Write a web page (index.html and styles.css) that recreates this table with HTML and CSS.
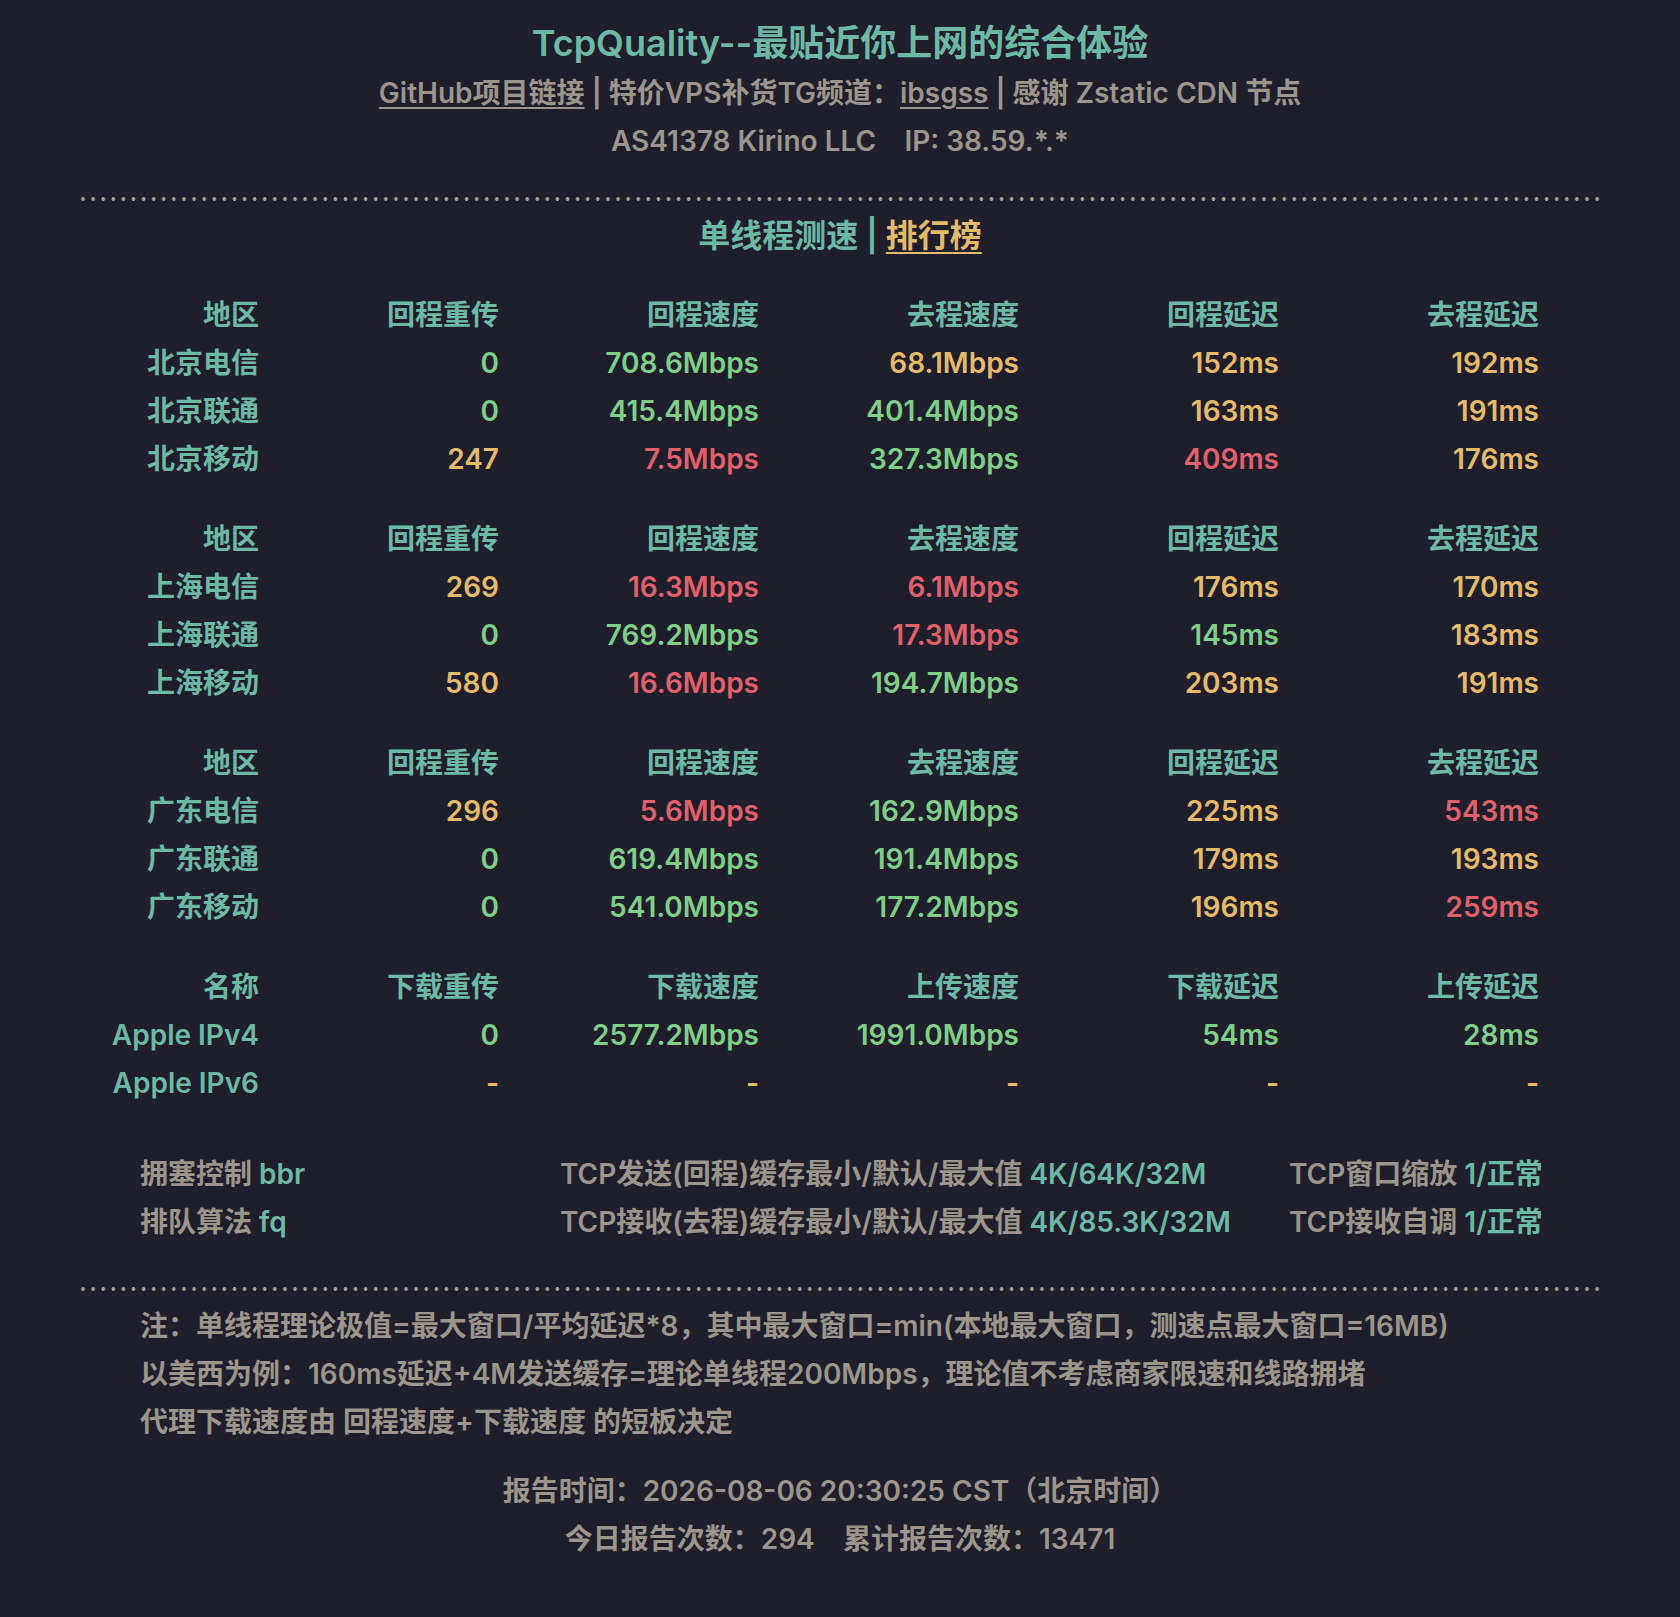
FILE: index.html
```html
<!DOCTYPE html>
<html lang="zh-CN">
<head>
<meta charset="utf-8">
<title>TcpQuality</title>
<link rel="stylesheet" href="styles.css">
</head>
<body>
<div class="page">
  <header class="head">
    <h1 class="title">TcpQuality--最贴近你上网的综合体验</h1>
    <p class="sub"><a class="link" href="#">GitHub项目链接</a> | 特价VPS补货TG频道：<a class="link" href="#">ibsgss</a> | 感谢 Zstatic CDN 节点</p>
    <p class="asn">AS41378 Kirino LLC&nbsp;&nbsp;&nbsp;&nbsp;IP: 38.59.*.*</p>
  </header>

  <div class="dots"></div>

  <h2 class="section">单线程测速 <span class="bar">|</span> <a class="rank" href="#">排行榜</a></h2>

  <div class="grid">
    <div class="h">地区</div><div class="h">回程重传</div><div class="h">回程速度</div><div class="h">去程速度</div><div class="h">回程延迟</div><div class="h">去程延迟</div>
    <div class="n">北京电信</div><div class="g">0</div><div class="g">708.6Mbps</div><div class="y">68.1Mbps</div><div class="y">152ms</div><div class="y">192ms</div>
    <div class="n">北京联通</div><div class="g">0</div><div class="g">415.4Mbps</div><div class="g">401.4Mbps</div><div class="y">163ms</div><div class="y">191ms</div>
    <div class="n">北京移动</div><div class="y">247</div><div class="r">7.5Mbps</div><div class="g">327.3Mbps</div><div class="r">409ms</div><div class="y">176ms</div>
  </div>

  <div class="grid gap">
    <div class="h">地区</div><div class="h">回程重传</div><div class="h">回程速度</div><div class="h">去程速度</div><div class="h">回程延迟</div><div class="h">去程延迟</div>
    <div class="n">上海电信</div><div class="y">269</div><div class="r">16.3Mbps</div><div class="r">6.1Mbps</div><div class="y">176ms</div><div class="y">170ms</div>
    <div class="n">上海联通</div><div class="g">0</div><div class="g">769.2Mbps</div><div class="r">17.3Mbps</div><div class="g">145ms</div><div class="y">183ms</div>
    <div class="n">上海移动</div><div class="y">580</div><div class="r">16.6Mbps</div><div class="g">194.7Mbps</div><div class="y">203ms</div><div class="y">191ms</div>
  </div>

  <div class="grid gap">
    <div class="h">地区</div><div class="h">回程重传</div><div class="h">回程速度</div><div class="h">去程速度</div><div class="h">回程延迟</div><div class="h">去程延迟</div>
    <div class="n">广东电信</div><div class="y">296</div><div class="r">5.6Mbps</div><div class="g">162.9Mbps</div><div class="y">225ms</div><div class="r">543ms</div>
    <div class="n">广东联通</div><div class="g">0</div><div class="g">619.4Mbps</div><div class="g">191.4Mbps</div><div class="y">179ms</div><div class="y">193ms</div>
    <div class="n">广东移动</div><div class="g">0</div><div class="g">541.0Mbps</div><div class="g">177.2Mbps</div><div class="y">196ms</div><div class="r">259ms</div>
  </div>

  <div class="grid gap">
    <div class="h">名称</div><div class="h">下载重传</div><div class="h">下载速度</div><div class="h">上传速度</div><div class="h">下载延迟</div><div class="h">上传延迟</div>
    <div class="n">Apple IPv4</div><div class="g">0</div><div class="g">2577.2Mbps</div><div class="g">1991.0Mbps</div><div class="g">54ms</div><div class="g">28ms</div>
    <div class="n">Apple IPv6</div><div class="y">-</div><div class="y">-</div><div class="y">-</div><div class="y">-</div><div class="y">-</div>
  </div>

  <div class="conf">
    <div>拥塞控制 <span class="v">bbr</span></div>
    <div>TCP发送(回程)缓存最小/默认/最大值 <span class="v">4K/64K/32M</span></div>
    <div>TCP窗口缩放 <span class="v">1/正常</span></div>
    <div>排队算法 <span class="v">fq</span></div>
    <div>TCP接收(去程)缓存最小/默认/最大值 <span class="v">4K/85.3K/32M</span></div>
    <div>TCP接收自调 <span class="v">1/正常</span></div>
  </div>

  <div class="dots dots2"></div>

  <div class="notes">
    <p>注：单线程理论极值=最大窗口/平均延迟*8，其中最大窗口=min(本地最大窗口，测速点最大窗口=16MB)</p>
    <p>以美西为例：160ms延迟+4M发送缓存=理论单线程200Mbps，理论值不考虑商家限速和线路拥堵</p>
    <p>代理下载速度由 回程速度+下载速度 的短板决定</p>
  </div>

  <footer class="foot">
    <p>报告时间：2026-08-06 20:30:25 CST（北京时间）</p>
    <p>今日报告次数：294&nbsp;&nbsp;&nbsp;&nbsp;累计报告次数：13471</p>
  </footer>
</div>
</body>
</html>
```

FILE: styles.css
```css
html, body {
  margin: 0;
  padding: 0;
  background: #1f1e2b;
}
body {
  font-family: Inter, "Noto Sans CJK SC", sans-serif;
  font-weight: 600;
  color: #9b958b;
}
.page {
  width: 1680px;
  min-height: 1617px;
  box-sizing: border-box;
  padding-top: 19px;
}
.head {
  text-align: center;
}
.title {
  margin: 0;
  font-size: 36px;
  line-height: 48px;
  font-weight: 600;
  color: #6db9a4;
}
.sub {
  margin: 3px 0 0;
  font-size: 28px;
  line-height: 47px;
}
.link {
  color: #9b958b;
  text-decoration: underline;
  text-underline-offset: 4px;
  text-decoration-thickness: 2px;
}
.asn {
  margin: 0;
  font-size: 28px;
  line-height: 48px;
}
.dots {
  margin: 32px 78px 0;
  height: 4px;
  background-image: radial-gradient(circle, #a7a196 1.6px, transparent 2.1px);
  background-size: 10.1px 4px;
  background-repeat: repeat-x;
}
.dots2 {
  margin-top: 41px;
}
.section {
  margin: 11px 0 0;
  text-align: center;
  font-size: 32px;
  line-height: 48px;
  font-weight: 600;
  color: #6db9a4;
}
.bar {
  color: #6db9a4;
}
.rank {
  color: #e3bb6b;
  text-decoration: underline;
  text-underline-offset: 5px;
  text-decoration-thickness: 2px;
}
.grid {
  display: grid;
  grid-template-columns: 159px 240px 260px 260px 260px 260px;
  margin: 31px 0 0 100px;
  font-size: 28px;
  line-height: 48px;
  text-align: right;
  white-space: nowrap;
}
.grid.gap {
  margin-top: 32px;
}
.h, .n { color: #6db9a4; }
.g { color: #7fcf8b; }
.y { color: #e3bb6b; }
.r { color: #e0616e; }
.conf {
  display: grid;
  grid-template-columns: 420px 729px 251px;
  margin: 43px 0 0 140px;
  font-size: 28px;
  line-height: 48px;
  white-space: nowrap;
}
.v { color: #6db9a4; }
.notes {
  margin: 11px 0 0 140px;
  font-size: 28px;
  line-height: 48px;
}
.notes p, .foot p {
  margin: 0;
}
.foot {
  margin-top: 21px;
  text-align: center;
  font-size: 28px;
  line-height: 48px;
}
```
